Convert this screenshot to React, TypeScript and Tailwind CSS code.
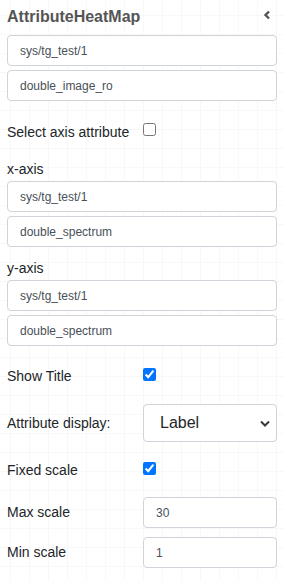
import { useState } from "react"

const font = { fontFamily: '"Liberation Sans", Arial, sans-serif' }

function TextInput({ value }: { value: string }) {
  return (
    <input
      defaultValue={value}
      className="block w-full h-[31px] rounded border border-[#ced4da] bg-white px-3 text-[12px] text-[#495057] outline-none"
    />
  )
}

function Check({ checked }: { checked?: boolean }) {
  const [on, setOn] = useState(!!checked)
  return (
    <input
      type="checkbox"
      checked={on}
      onChange={() => setOn(!on)}
      className="mt-[1px] h-[13px] w-[13px]"
    />
  )
}

export default function App() {
  return (
    <div
      style={font}
      className="min-h-[581px] w-[284px] bg-white bg-[linear-gradient(to_right,#f8f8f8_1px,transparent_1px),linear-gradient(to_bottom,#f8f8f8_1px,transparent_1px)] bg-[size:19px_19px] bg-[position:10px_15px] px-[7px] pt-[5px] text-[14px] text-[#212529]"
    >
      {/* Header */}
      <div className="flex h-6 items-center justify-between">
        <h1 className="text-[16px] font-bold leading-6 text-[#555]">AttributeHeatMap</h1>
        <svg width="8" height="10" viewBox="0 0 8 10" className="mr-[6px] -mt-[4px]">
          <polyline points="6,1.5 2.5,5 6,8.5" fill="none" stroke="#555" strokeWidth="2.4" />
        </svg>
      </div>

      <div className="mt-[6px] flex flex-col gap-1">
        <TextInput value="sys/tg_test/1" />
        <TextInput value="double_image_ro" />
      </div>

      <div className="mt-[21px] grid h-5 grid-cols-[136px_1fr] items-start leading-5">
        <span>Select axis attribute</span>
        <div className="-mt-[1px]">
          <Check />
        </div>
      </div>

      <div className="mt-[17px] h-5 leading-5">x-axis</div>
      <div className="mt-[2px] flex flex-col gap-1">
        <TextInput value="sys/tg_test/1" />
        <TextInput value="double_spectrum" />
      </div>

      <div className="mt-[11px] h-5 leading-5">y-axis</div>
      <div className="mt-[2px] flex flex-col gap-1">
        <TextInput value="sys/tg_test/1" />
        <TextInput value="double_spectrum" />
      </div>

      <div className="mt-[20px] grid h-5 grid-cols-[136px_1fr] items-start leading-5">
        <span>Show Title</span>
        <div>
          <Check checked />
        </div>
      </div>

      <div className="mt-[18px] grid grid-cols-[136px_1fr] items-center">
        <span>Attribute display:</span>
        <div className="relative">
          <select
            defaultValue="Label"
            className="block h-[38px] w-full appearance-none rounded border border-[#ced4da] bg-white pl-4 pr-8 text-[16px] text-[#212529] outline-none"
          >
            <option>Label</option>
            <option>Name</option>
          </select>
          <svg
            width="10"
            height="7"
            viewBox="0 0 10 7"
            className="pointer-events-none absolute right-[7px] top-[16px]"
          >
            <polyline points="1,1.5 5,5.5 9,1.5" fill="none" stroke="#343a40" strokeWidth="2" />
          </svg>
        </div>
      </div>

      <div className="mt-[18px] grid h-5 grid-cols-[136px_1fr] items-start leading-5">
        <span>Fixed scale</span>
        <div>
          <Check checked />
        </div>
      </div>

      <div className="mt-[17px] grid grid-cols-[136px_1fr] items-center">
        <span>Max scale</span>
        <TextInput value="30" />
      </div>

      <div className="mt-[9px] grid grid-cols-[136px_1fr] items-center">
        <span>Min scale</span>
        <TextInput value="1" />
      </div>
    </div>
  )
}
